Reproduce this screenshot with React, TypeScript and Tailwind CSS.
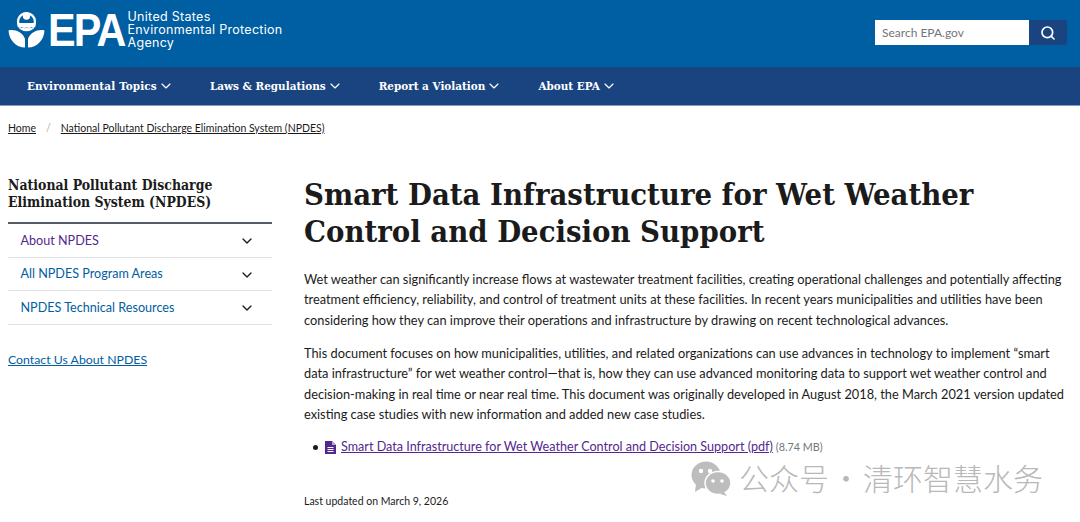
import { ChevronDown, Search } from "lucide-react";

const body = "font-['Lato','Noto_Sans',sans-serif]";
const serif = "font-['DejaVu_Serif_Condensed','DejaVu_Serif',serif]";

const navItems = ["Environmental Topics", "Laws & Regulations", "Report a Violation", "About EPA"];

const sideItems = [
  { label: "About NPDES", color: "text-[#54278f]" },
  { label: "All NPDES Program Areas", color: "text-[#005ea2]" },
  { label: "NPDES Technical Resources", color: "text-[#005ea2]" },
];

function EpaMark() {
  return (
    <svg width="37" height="37" viewBox="0 0 37 37" fill="white">
      <path d="M18.5 1a9.6 9.6 0 0 1 9.6 9.6c0 1.6-.4 3.2-1.1 4.5h-3.4c1.3-1 2.2-2.6 2.2-4.500a7.300 7.300 0 0 0-14.600 0c0 1.800.9 3.500 2.200 4.500h-3.400a9.600 9.600 0 0 1 8.500-14.100z" />
      <circle cx="18.500" cy="5" r="3.700" />
      <path d="M9.500 12h18v3.500c-1.500 1.800-3 1.800-4.500.5-1.500 1.300-3 1.300-4.500 0-1.500 1.300-3 1.300-4.500 0-1.500 1.300-3 1.300-4.500-.5z" />
      <path d="M10.500 16.500c2 1.300 3 .8 4-.2 1.300 1.300 2.800 1.300 4 0 1.300 1.300 2.800 1.300 4 0 1 1 2 1.500 4 .2-1.300 2-4 3.700-8 3.700s-6.700-1.700-8-3.700z" />
      <path d="M0.500 19.500c6-1.500 14 1.500 16.500 8.500v8.500C8 36.500 1 29 .5 19.500z" />
      <path d="M36.500 19.500c-6-1.500-14 1.500-16.500 8.500v8.500c9 0 16-7.500 16.500-17z" />
    </svg>
  );
}

function WeChatMark() {
  return (
    <svg width="41" height="35" viewBox="0 0 41 35">
      <ellipse cx="15" cy="14" rx="14.500" ry="13.500" fill="#bdbdbd" />
      <path d="M5 23l-1 8 8-5z" fill="#bdbdbd" />
      <ellipse cx="27" cy="22" rx="13" ry="11.500" fill="#bdbdbd" stroke="#fff" strokeWidth="1.500" />
      <path d="M33 31l3 4-7-2z" fill="#bdbdbd" />
      <circle cx="10" cy="10" r="2.200" fill="#fff" />
      <circle cx="19" cy="10" r="2.200" fill="#fff" />
      <circle cx="22" cy="20" r="1.800" fill="#fff" />
      <circle cx="31" cy="20" r="1.800" fill="#fff" />
    </svg>
  );
}

export default function App() {
  return (
    <div className={`relative h-[522px] w-[1080px] overflow-hidden bg-white ${body}`}>
      {/* Top banner */}
      <header className="flex h-[67px] items-center justify-between bg-[#005ea2] pl-[7.500px] pr-[13px]">
        <div className="flex items-center pb-[9px]">
          <EpaMark />
          <span className="ml-[3px] w-[76px] origin-left scale-x-[0.88] font-['Liberation_Sans',sans-serif] text-[47px] font-bold leading-none tracking-[-2px] text-white">
            EPA
          </span>
          <div className="ml-[4px] font-['Inter',sans-serif] text-[12.500px] leading-[13px] tracking-[0.3px] text-white">
            <div>United States</div>
            <div>Environmental Protection</div>
            <div>Agency</div>
          </div>
        </div>
        <div className="mb-[2px] flex h-[25px]">
          <div className="flex w-[154px] items-center bg-white pl-[7px] text-[12px] text-[#71767a]">Search EPA.gov</div>
          <button className="flex w-[38px] items-center justify-center rounded-r-[3px] bg-[#1a4480]">
            <Search className="h-[16px] w-[16px] text-white" strokeWidth={2.500} />
          </button>
        </div>
      </header>

      {/* Main nav */}
      <nav className="flex h-[39px] items-center gap-[36px] border-b border-[#7f9cc4] bg-[#1a4480] pl-[27px] pt-[1px]">
        {navItems.map((item) => (
          <div key={item} className={`flex items-center text-[11.600px] font-bold text-white first:tracking-[0.15px] ${serif}`}>
            {item}
            <ChevronDown className="ml-[1px] h-[16px] w-[16px]" strokeWidth={1.750} />
          </div>
        ))}
      </nav>

      {/* Breadcrumb */}
      <div className="flex items-center pl-2 pt-[15px] text-[10.500px] leading-[14px] text-[#1b1b1b]">
        <span className="underline">Home</span>
        <span className="mx-[10px] text-[#a9aeb1]">/</span>
        <span className="underline">National Pollutant Discharge Elimination System (NPDES)</span>
      </div>

      <div className="flex pl-2 pt-[29px]">
        {/* Sidebar */}
        <aside className="w-[264px] shrink-0 pt-[12.500px]">
          <h2 className={`pb-[11.500px] text-[13.900px] font-bold leading-[17px] text-[#1b1b1b] ${serif}`}>
            National Pollutant Discharge Elimination System (NPDES)
          </h2>
          <div className="border-t-2 border-[#565c65]">
            {sideItems.map((item) => (
              <div key={item.label} className="flex h-[33.500px] items-center justify-between border-b border-[#dfe1e2] pl-[12.500px] pr-[17px] pt-[2px]">
                <span className={`text-[12.600px] ${item.color}`}>{item.label}</span>
                <ChevronDown className="h-[16px] w-[16px] text-[#1b1b1b]" strokeWidth={2} />
              </div>
            ))}
          </div>
          <div className="mt-[26px] text-[12.300px] text-[#005ea2] underline">Contact Us About NPDES</div>
        </aside>

        {/* Content */}
        <main className="ml-[32px] w-[770px] pt-[12px] text-[12.800px] leading-[20.500px] text-[#1b1b1b]">
          <h1 className={`text-[30.700px] font-bold leading-[37px] ${serif}`}>
            Smart Data Infrastructure for Wet Weather
            <br />
            Control and Decision Support
          </h1>
          <p className="mt-[18.500px]">
            Wet weather can significantly increase flows at wastewater treatment facilities, creating operational challenges and potentially affecting
            <br />
            treatment efficiency, reliability, and control of treatment units at these facilities. In recent years municipalities and utilities have been
            <br />
            considering how they can improve their operations and infrastructure by drawing on recent technological advances.
          </p>
          <p className="mt-[12.500px]">
            This document focuses on how municipalities, utilities, and related organizations can use advances in technology to implement “smart
            <br />
            data infrastructure” for wet weather control—that is, how they can use advanced monitoring data to support wet weather control and
            <br />
            decision-making in real time or near real time. This document was originally developed in August 2018, the March 2021 version updated
            <br />
            existing case studies with new information and added new case studies.
          </p>
          <div className="mt-[12.500px] flex items-center pl-[9px]">
            <span className="h-[5px] w-[5px] rounded-full bg-[#1b1b1b]" />
            <svg className="ml-[7px]" width="11" height="13" viewBox="0 0 11 13">
              <path d="M0 0h7l4 4v9H0z" fill="#54278f" />
              <path d="M7 0v4h4z" fill="#b9a5d6" />
              <path d="M2.500 6.500h6M2.500 8.500h6M2.500 10.500h6" stroke="#fff" strokeWidth="1" />
            </svg>
            <span className="ml-[5px] text-[12.600px] text-[#54278f] underline">Smart Data Infrastructure for Wet Weather Control and Decision Support (pdf)</span>
            <span className="ml-[3px] text-[10.800px] text-[#71767a]">(8.74 MB)</span>
          </div>
          <div className="mt-[36px] text-[10.500px] leading-[14px]">Last updated on March 9, 2026</div>
        </main>
      </div>

      {/* WeChat watermark over the page */}
      <div className="absolute left-[691px] top-[461px] flex items-center font-['Noto_Sans_CJK_SC',sans-serif] text-[30px] font-light leading-none text-[#b8b8b8]">
        <WeChatMark />
        <div className="mb-[4px] ml-[7px] flex items-center">
          <span>公众号</span>
          <span className="w-[34px] text-center">·</span>
          <span>清环智慧水务</span>
        </div>
      </div>
    </div>
  );
}
